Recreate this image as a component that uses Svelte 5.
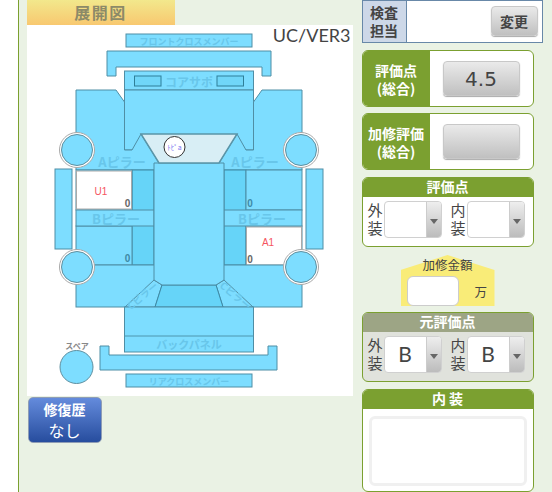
<script lang="ts">
  // 展開図 parts, in page pixels (the svg viewBox starts at the panel corner)
  const axis = 189;
  const mirror = (pts: number[][]) => pts.map(([x, y]) => [axis * 2 - x, y]);
  const str = (pts: number[][]) => pts.map((p) => p.join(',')).join(' ');

  const fender = [[76, 90], [116, 90], [124.5, 102], [124.5, 150], [132, 150], [141, 134], [159, 163], [154, 170], [76, 170]];
  const quarter = [[154, 280], [162, 285], [155, 307], [125, 307]];

  const wheels = [[77, 150], [301, 150], [77, 267], [301, 267]];
  const marks = [[127.5, 203.5, '#666'], [127.5, 258.5, '#3d8aa6'], [250, 203, '#3d8aa6'], [250, 259, '#666']];
  const labels = [
    { x: 189, y: 41, t: 'フロントクロスメンバー', s: 9 },
    { x: 189, y: 81, t: 'コアサポ', s: 12 },
    { x: 122, y: 161, t: 'Aピラー', s: 13 },
    { x: 255, y: 161, t: 'Aピラー', s: 13 },
    { x: 116, y: 218, t: 'Bピラー', s: 13 },
    { x: 262, y: 218, t: 'Bピラー', s: 13 },
    { x: 189, y: 344, t: 'バックパネル', s: 11 },
    { x: 189, y: 381, t: 'リアクロスメンバー', s: 9 },
  ];

  const grades = [
    { title: '評価点', tone: 'green', outer: '', inner: '' },
    { title: '元評価点', tone: 'olive', outer: 'B', inner: 'B' },
  ];
</script>

{#snippet picker(label: string, value: string)}
  <div class="picker">
    <span class="picker-label">{label}</span>
    <div class="select">
      <span class="select-value">{value}</span>
      <span class="select-arrow"></span>
    </div>
  </div>
{/snippet}

{#snippet gradeCard(g: { title: string; tone: string; outer: string; inner: string })}
  <section class="card {g.tone}">
    <h3>{g.title}</h3>
    <div class="picker-row">
      {@render picker('外装', g.outer)}
      {@render picker('内装', g.inner)}
    </div>
  </section>
{/snippet}

<div class="page">
  <main class="content">
    <div class="left">
      <div class="tab">展開図</div>
      <div class="sheet">
        <svg width="326" height="371" viewBox="27 25 326 371" role="img" aria-label="展開図">
          <g class="part">
            <rect x="126" y="34" width="126" height="13" />
            <polygon points="107,51 271,51 271,76 262,76 262,67 116,67 116,76 107,76" />
            <rect x="55" y="169" width="17" height="80" />
            <rect x="306" y="169" width="17" height="80" />

            <rect x="124.5" y="71" width="129" height="19" />
            <rect class="inner" x="134.5" y="76" width="26.5" height="10" />
            <rect class="inner" x="217" y="76" width="26.5" height="10" />

            <rect x="124.5" y="90" width="129" height="60" />
            <polygon points={str(fender)} />
            <polygon points={str(mirror(fender))} />

            <!-- doors -->
            <rect class="glass" x="132" y="170" width="22" height="95" />
            <rect class="glass" x="224" y="170" width="22" height="95" />
            <rect x="76" y="170" width="56" height="40" />
            <rect x="246" y="170" width="56" height="40" />
            <rect x="76" y="226" width="56" height="39" />
            <rect x="246" y="226" width="56" height="39" />
            <rect x="76" y="210" width="78" height="16" />
            <rect x="224" y="210" width="78" height="16" />
            <rect class="blank" x="76.5" y="171" width="55" height="38" />
            <rect class="blank" x="246.5" y="227" width="55" height="38" />

            <!-- rear -->
            <rect x="76" y="265" width="226" height="42" />
            <polygon points={str(quarter)} />
            <polygon points={str(mirror(quarter))} />
            <polygon class="glass" points="162,285 216,285 223,307 155,307" />
            <polygon points="154,163 224,163 224,280 216,285 162,285 154,280" />
            <polygon class="shield" points="141,134 237,134 219,163 159,163" />

            <rect x="124.5" y="307" width="129" height="45" />
            <line x1="124.5" y1="336" x2="253.5" y2="336" />
            <polygon points="100,346 109,346 109,355 268,355 268,346 277,346 277,370 100,370" />
            <rect x="126" y="374" width="126" height="13" />
          </g>

          {#each wheels as [cx, cy]}
            <circle class="rim" {cx} {cy} r="17.5" />
            <circle class="tire" {cx} {cy} r="15.5" />
          {/each}
          <circle class="tire" cx="76.5" cy="367" r="16.5" />

          {#each labels as l}
            <text class="part-label" x={l.x} y={l.y} font-size={l.s}>{l.t}</text>
          {/each}
          <text class="part-label" font-size="10" transform="translate(142 295) rotate(-40)">Cピラー</text>
          <text class="part-label" font-size="10" transform="translate(236 295) rotate(40)">Cピラー</text>
          <text class="spare" x="77" y="345">スペア</text>

          {#each marks as [x, y, c]}
            <text class="mark" {x} {y} fill={c as string}>0</text>
          {/each}

          <text class="damage" x="101" y="191">U1</text>
          <text class="damage" x="268" y="242">A1</text>

          <circle class="badge" cx="174.5" cy="147" r="10.5" />
          <text class="badge-text" x="174.5" y="147">ﾄﾋﾟa</text>
        </svg>
        <span class="version">UC/VER3</span>
      </div>
      <button class="history">
        <span class="history-title">修復歴</span>
        <span class="history-value">なし</span>
      </button>
    </div>

    <aside class="right">
      <div class="inspector">
        <div class="inspector-label">検査<br />担当</div>
        <div class="inspector-body"><button class="change">変更</button></div>
      </div>

      <div class="score">
        <div class="score-label">評価点<br />(総合)</div>
        <div class="score-body"><button class="score-btn">4.5</button></div>
      </div>
      <div class="score">
        <div class="score-label">加修評価<br />(総合)</div>
        <div class="score-body"><button class="score-btn"></button></div>
      </div>

      {@render gradeCard(grades[0])}

      <div class="repair">
        <div class="repair-title">加修金額</div>
        <div class="repair-row">
          <div class="repair-input"></div>
          <span>万</span>
        </div>
      </div>

      {@render gradeCard(grades[1])}

      <section class="card green notes">
        <h3>内 装</h3>
        <div class="notes-body"><div class="notes-box"></div></div>
      </section>
    </aside>
  </main>
</div>

<style>
  :global(body) {
    margin: 0;
    background: #eaf2e4;
    font-family: 'Noto Sans CJK JP', 'Liberation Sans', sans-serif;
  }

  .page {
    height: 492px;
    overflow: hidden;
    padding-left: 18px;
    background: #fff;
  }

  .content {
    height: 492px;
    display: flex;
    border-left: 1.5px solid #7ba030;
    background: #eaf2e4;
    padding-left: 7.5px;
  }

  .left {
    width: 335px;
    flex: none;
  }

  .tab {
    width: 148px;
    height: 25px;
    background: linear-gradient(#f2e88c, #f8c870);
    color: #8c8a68;
    font-size: 16px;
    font-weight: 700;
    line-height: 25px;
    text-align: center;
    letter-spacing: 1.5px;
  }

  .sheet {
    position: relative;
    width: 326px;
    height: 371px;
    background: #fff;
  }

  svg {
    display: block;
  }

  .part :global(rect),
  .part :global(polygon) {
    fill: #7dddff;
    stroke: #4f8ea5;
    stroke-width: 1;
  }

  .part line {
    stroke: #4f96ae;
    stroke-width: 1;
  }

  .part .inner {
    fill: #70d6f8;
    stroke: #2f7f99;
  }

  .part .glass {
    fill: #66d4f8;
    stroke: #3d8aa6;
  }

  .part .blank {
    fill: #fff;
    stroke: #aaa;
  }

  .part .shield {
    fill: #d8eef5;
    stroke: #5a95a8;
    stroke-width: 1.5;
  }

  .rim {
    fill: #fff;
    stroke: #a8a8a8;
    stroke-width: 1;
  }

  .tire {
    fill: #7dddff;
    stroke: #5f8f9f;
    stroke-width: 1;
  }

  text {
    text-anchor: middle;
    dominant-baseline: central;
  }

  .part-label {
    fill: #68c6ea;
    font-weight: 700;
  }

  .spare {
    fill: #888;
    font-size: 8px;
    font-weight: 700;
  }

  .mark {
    font-family: 'Liberation Sans', sans-serif;
    font-size: 10px;
    font-weight: 700;
  }

  .damage {
    fill: #f55561;
    font-family: 'Liberation Sans', sans-serif;
    font-size: 10px;
  }

  .badge {
    fill: #fff;
    stroke: #333;
    stroke-width: 1;
  }

  .badge-text {
    fill: #7a78f0;
    font-size: 7px;
  }

  .version {
    position: absolute;
    top: 0;
    right: 2px;
    color: #444;
    font-family: Lato, sans-serif;
    font-size: 18px;
    line-height: 20px;
  }

  .history {
    display: flex;
    flex-direction: column;
    align-items: center;
    width: 74px;
    height: 46px;
    margin: 1px 0 0 1px;
    padding: 0;
    border: 1px solid #8f9db5;
    border-radius: 5px;
    background: linear-gradient(#648bdc, #274d9e);
    color: #fff;
  }

  .history-title {
    font-size: 14px;
    font-weight: 700;
    line-height: 23px;
    font-family: 'Noto Sans CJK JP', sans-serif;
  }

  .history-value {
    font-size: 16px;
    line-height: 18px;
    font-family: 'Noto Sans CJK JP', sans-serif;
  }

  .right {
    width: 181px;
    flex: none;
    display: flex;
    flex-direction: column;
    align-items: flex-start;
  }

  .right > :global(*) {
    flex: none;
  }

  .inspector {
    box-sizing: border-box;
    width: 181px;
    height: 43px;
    display: flex;
    border: 1px solid #6888a8;
    background: #fff;
  }

  .inspector-label {
    width: 43px;
    background: #cdd8e8;
    border-right: 1px solid #6888a8;
    color: #444;
    font-size: 14px;
    font-weight: 700;
    line-height: 18px;
    text-align: center;
    padding-top: 2px;
  }

  .inspector-body {
    flex: 1;
    display: flex;
    justify-content: flex-end;
    padding: 5px 4px 0 0;
  }

  .change,
  .score-btn {
    padding: 0;
    border: 1px solid #c8c8c8;
    border-radius: 4px;
    background: linear-gradient(#eaeaea, #c0c0c0);
    box-shadow: 0 1px 1px #aaa;
    color: #444;
    font-family: inherit;
  }

  .change {
    width: 47px;
    height: 30px;
    font-size: 14px;
    font-weight: 700;
  }

  .score {
    box-sizing: border-box;
    width: 172px;
    height: 57px;
    display: flex;
    margin-top: 6px;
    border: 1px solid #7ba030;
    border-radius: 6px;
    overflow: hidden;
    background: #fff;
  }

  .inspector + .score {
    margin-top: 7px;
  }

  .score-label {
    width: 67px;
    flex: none;
    display: flex;
    align-items: center;
    justify-content: center;
    background: #7ba030;
    color: #fff;
    font-size: 14px;
    font-weight: 700;
    line-height: 18px;
    text-align: center;
  }

  .score-body {
    flex: 1;
    padding: 10px 0 0 13px;
  }

  .score-btn {
    display: block;
    width: 77px;
    height: 35px;
    font-family: 'DejaVu Sans', sans-serif;
    font-size: 20px;
  }

  .card {
    box-sizing: border-box;
    width: 172px;
    margin-top: 7px;
    border: 1px solid #7ba030;
    border-radius: 6px;
    overflow: hidden;
    background: #fff;
  }

  .card h3 {
    margin: -1px -1px 0;
    height: 20px;
    background: #7ba030;
    color: #fff;
    font-size: 14px;
    font-weight: 700;
    line-height: 19px;
    text-align: center;
  }

  .card.olive {
    background: #e0e2dc;
    margin-top: 6px;
  }

  .card.olive h3 {
    background: #9da585;
  }

  .picker-row {
    display: flex;
    height: 49px;
    padding: 4px 0 0 5px;
    box-sizing: border-box;
    gap: 9px;
  }

  .picker {
    display: flex;
  }

  .picker-label {
    width: 16px;
    color: #444;
    font-size: 15px;
    line-height: 18px;
  }

  .select {
    box-sizing: border-box;
    width: 58px;
    height: 37px;
    display: flex;
    border: 1px solid #d0d0d0;
    border-radius: 4px;
    background: #fff;
    overflow: hidden;
  }

  .select-value {
    flex: 1;
    color: #444;
    font-family: Lato, sans-serif;
    font-size: 21px;
    line-height: 33px;
    text-align: center;
  }

  .select-arrow {
    width: 14px;
    position: relative;
    background: linear-gradient(#eee, #bcbcbc);
    border-left: 1px solid #ccc;
  }

  .select-arrow::after {
    content: '';
    position: absolute;
    left: 3px;
    top: 17px;
    border: 4px solid transparent;
    border-top: 5px solid #666;
    border-bottom: 0;
  }

  .repair {
    position: relative;
    width: 94px;
    height: 51px;
    margin: 8px 0 0 39px;
    color: #444;
  }

  /* the roof shape sits behind the label, so the label is not cut by it */
  .repair::before {
    content: '';
    position: absolute;
    inset: 0;
    background: #f9ec78;
    clip-path: polygon(0 15px, 50% 0, 100% 15px, 100% 100%, 0 100%);
  }

  .repair-title,
  .repair-row {
    position: relative;
  }

  .repair-title {
    font-size: 12.5px;
    line-height: 18px;
    padding-top: 1px;
    height: 20px;
    text-align: center;
  }

  .repair-row {
    display: flex;
    align-items: center;
    padding-left: 6px;
    font-size: 12.5px;
  }

  .repair-input {
    box-sizing: border-box;
    width: 52px;
    height: 30px;
    border: 1px solid #ccc;
    border-radius: 6px;
    background: #fff;
    margin-right: 16px;
  }

  .notes {
    height: 103px;
  }

  .notes-body {
    padding: 7px 6px;
  }

  .notes-box {
    box-sizing: border-box;
    height: 70px;
    border: 3px solid #f0f0f0;
    border-radius: 6px;
    background: #fff;
  }
</style>
